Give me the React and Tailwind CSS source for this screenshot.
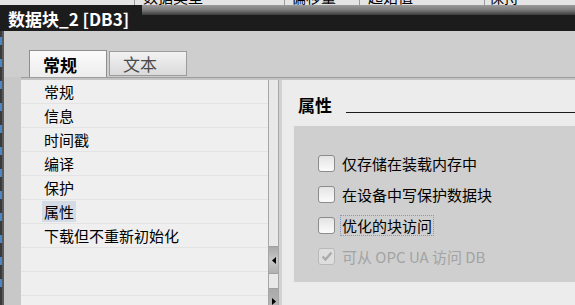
import React from "react";

const FONT = { fontFamily: '"Noto Sans CJK SC", "Liberation Sans", sans-serif' };

const navItems = ["常规", "信息", "时间戳", "编译", "保护", "属性", "下载但不重新初始化", "", "", ""];

const options = [
  { label: "仅存储在装载内存中" },
  { label: "在设备中写保护数据块" },
  { label: "优化的块访问", focused: true },
  { label: "可从 OPC UA 访问 DB", checked: true, disabled: true },
];

const Checkbox = ({ checked, disabled }) => (
  <div
    className={`w-[17px] h-[17px] rounded-[3px] border flex items-center justify-center shrink-0 ${
      disabled
        ? "border-[#b9b9b9] bg-[#dedede]"
        : "border-[#8c8c8c] bg-linear-to-b from-[#e4e4e4] to-[#fbfbfb]"
    }`}
  >
    {checked && (
      <svg width="12" height="11" viewBox="0 0 12 11">
        <path d="M1.5 5.5 L4.5 8.5 L10.5 1.5" fill="none" stroke="#ababab" strokeWidth="2.4" />
      </svg>
    )}
  </div>
);

export default function App() {
  return (
    <div className="w-[575px] h-[305px] overflow-hidden flex flex-col bg-[#cecece]" style={FONT}>
      {/* background table peeking out */}
      <div className="h-[5px] shrink-0 overflow-hidden bg-[#e4e4e4] flex text-[15px] text-black leading-none">
        <div className="w-[135px] border-r border-[#9a9a9a]" />
        <div className="w-[150px] border-r border-[#9a9a9a] pl-[8px] -mt-[11px]">数据类型</div>
        <div className="w-[75px] border-r border-[#9a9a9a] pl-[6px] -mt-[11px]">偏移量</div>
        <div className="w-[125px] border-r border-[#9a9a9a] pl-[8px] -mt-[11px]">起始值</div>
        <div className="flex-1 pl-[4px] -mt-[11px]">保持</div>
      </div>

      {/* title bar */}
      <div className="h-[26px] shrink-0 flex">
        <div className="w-[142px] bg-[#1c1c1c] text-white font-bold text-[17px] leading-none pl-[8px] flex items-center pt-[1px]">
          数据块_2 [DB3]
        </div>
        <div className="flex-1 flex flex-col">
          <div className="h-[10px] bg-linear-to-b from-[#9a9a9a] via-[#7a7a7a] to-[#3c3c3c]" />
          <div className="flex-1 bg-[#1c1c1c]" />
        </div>
      </div>

      {/* dialog body */}
      <div className="flex-1 min-h-0 overflow-hidden flex">
        <div className="w-[2px] shrink-0 bg-[#3a3a3a] flex flex-col gap-[14px] pt-[6px]">
          {Array.from({ length: 12 }).map((_, i) => (
            <div key={i} className="h-[8px] shrink-0 bg-[#4b86c6]" />
          ))}
        </div>
        <div className="w-[2px] shrink-0 bg-[#5a5a5a]" />
        <div className="flex-1 flex flex-col">
          {/* tabs */}
          <div className="h-[46px] shrink-0 flex items-end pl-[25px] gap-[2px]">
            <div className="w-[78px] h-[27px] border border-b-0 border-[#8e8e8e] bg-linear-to-b from-[#fbfbfb] to-[#ededed] flex items-center pl-[13px] text-[17px] font-bold text-black leading-none">
              常规
            </div>
            <div className="w-[78px] h-[25px] mb-[1px] border border-[#9c9c9c] bg-linear-to-b from-[#f2f2f2] to-[#dadada] flex items-center pl-[13px] text-[17px] text-[#4a4a4a] leading-none">
              文本
            </div>
          </div>

          <div className="flex-1 flex">
            <div className="w-[17px] bg-[#c8c8c8]" />
            <div className="flex-1 flex flex-col border-t border-[#9c9c9c]">
              <div className="h-[2px] shrink-0 bg-[#c4c4c4]" />
              <div className="flex-1 flex">
                {/* navigation list */}
                <div className="w-[247px] bg-[#efefef] flex flex-col">
                  {navItems.map((item, i) => (
                    <div
                      key={i}
                      className="h-[24px] shrink-0 border-b border-[#e3e3e3] flex items-center pl-[21px] text-[15px] text-black leading-none"
                    >
                      {item && (
                        <span className={`px-[2px] py-[3px] ${item === "属性" ? "bg-[#d3dbe6]" : ""}`}>{item}</span>
                      )}
                    </div>
                  ))}
                </div>

                {/* splitter / scroll strip */}
                <div className="w-[11px] border-x border-[#a6a6a6] bg-[#e8e8e8] flex flex-col">
                  <div className="h-[166px] shrink-0" />
                  <div className="h-[28px] shrink-0 border-y border-[#a0a0a0] bg-linear-to-b from-[#a9a9a9] via-[#c8c8c8] to-[#b0b0b0] flex items-center justify-center">
                    <svg width="4" height="7" viewBox="0 0 4 7">
                      <path d="M4 0 L0 3.5 L4 7 Z" fill="#000" />
                    </svg>
                  </div>
                  <div className="h-[14px] shrink-0" />
                  <div className="h-[40px] shrink-0 border-t border-[#a0a0a0] bg-linear-to-b from-[#a9a9a9] to-[#c8c8c8] flex justify-center pt-[9px]">
                    <svg width="4" height="7" viewBox="0 0 4 7">
                      <path d="M0 0 L4 3.5 L0 7 Z" fill="#000" />
                    </svg>
                  </div>
                </div>
                <div className="w-[3px] bg-[#d2d2d2]" />

                {/* properties panel */}
                <div className="flex-1 bg-[#ececec] flex flex-col pl-[12px]">
                  <div className="h-[34px] shrink-0 flex items-end pl-[4px] gap-[14px]">
                    <span className="text-[17px] font-bold text-black leading-none pb-[1px]">属性</span>
                    <div className="flex-1 h-px bg-[#1a1a1a] mb-[1px]" />
                  </div>
                  <div className="h-[156px] shrink-0 mt-[12px] bg-[#cfcfcf] pt-[29px] pl-[24px] flex flex-col gap-[14px]">
                    {options.map((o) => (
                      <div key={o.label} className="h-[17px] flex items-center gap-[6px]">
                        <Checkbox checked={o.checked} disabled={o.disabled} />
                        <span
                          className={`text-[15px] leading-none px-px py-[2px] ${
                            o.disabled ? "text-[#a3a3a3]" : "text-black"
                          } ${o.focused ? "outline-1 outline-dotted outline-[#8696c4]" : ""}`}
                        >
                          {o.label}
                        </span>
                      </div>
                    ))}
                  </div>
                </div>
              </div>
            </div>
          </div>
        </div>
      </div>
    </div>
  );
}
